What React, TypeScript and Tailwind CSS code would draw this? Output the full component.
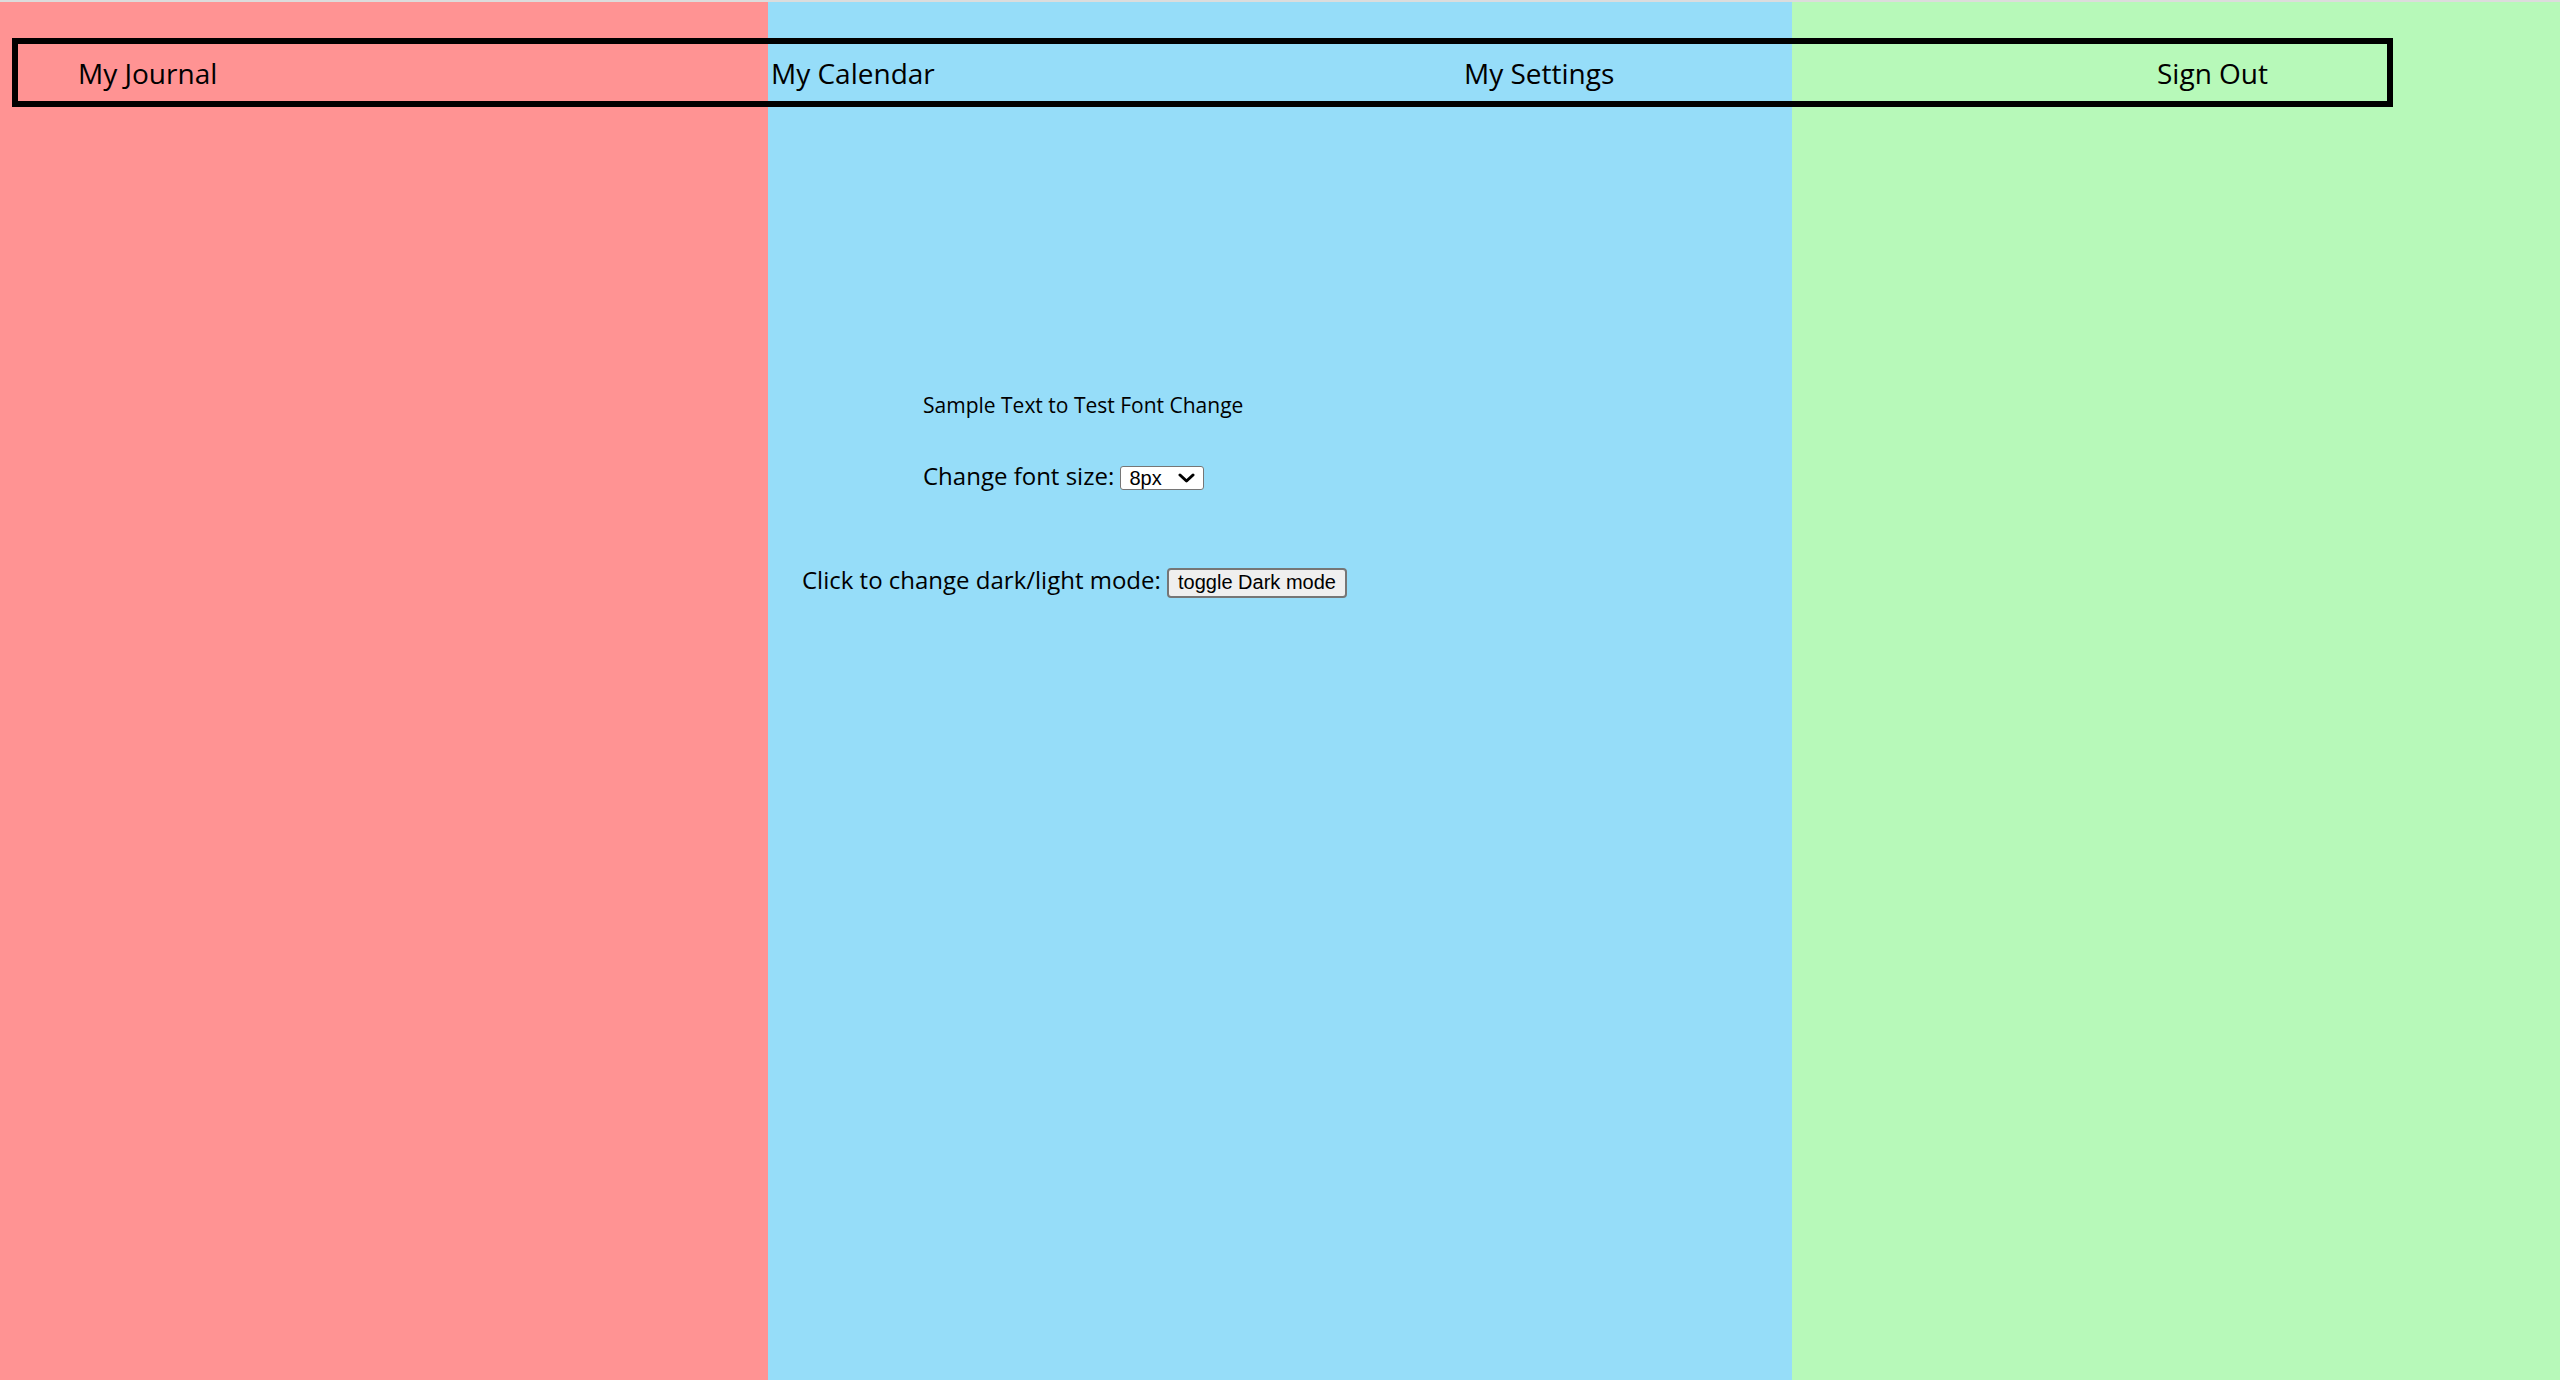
import { useState } from 'react';

const NAV_ITEMS = ['My Journal', 'My Calendar', 'My Settings', 'Sign Out'];

export default function App() {
  const [size, setSize] = useState('8px');
  const [dark, setDark] = useState(false);

  return (
    <div className="relative h-screen overflow-hidden border-t-2 border-[#dcdcdc] font-['Open_Sans',sans-serif] text-black">
      <div className="grid h-full grid-cols-[3fr_4fr_3fr]">
        <div className="bg-[#ff9393]" />
        <div className="bg-[#96ddf9] pt-[389px]">
          <p className="ml-[155px] text-[21px] leading-[29px]">Sample Text to Test Font Change</p>
          <p className="ml-[155px] mt-[39px] text-[24px] leading-[33px]">
            Change font size:{' '}
            <span className="relative inline-flex">
              <select
                value={size}
                onChange={(e) => setSize(e.target.value)}
                className="h-[24px] w-[84px] appearance-none rounded-[3px] border border-[#767676] bg-white pl-[8px] font-['Liberation_Sans',Arial,sans-serif] text-[20px] leading-[22px]"
              >
                <option>8px</option>
                <option>12px</option>
                <option>16px</option>
                <option>20px</option>
              </select>
              <svg
                className="pointer-events-none absolute right-[9px] top-[7px]"
                width="17"
                height="10"
                viewBox="0 0 17 10"
                fill="none"
              >
                <polyline points="2,2 8.5,8 15,2" stroke="black" strokeWidth="3" strokeLinecap="round" strokeLinejoin="round" />
              </svg>
            </span>
          </p>
          <p className="ml-[34px] mt-[71px] text-[24px] leading-[33px]">
            Click to change dark/light mode:{' '}
            <button
              onClick={() => setDark(!dark)}
              className="h-[30px] rounded-[4px] border-2 border-[#767676] bg-[#efefef] px-[9px] font-['Liberation_Sans',Arial,sans-serif] text-[20px] leading-[23px]"
            >
              toggle Dark mode
            </button>
          </p>
        </div>
        <div className="bg-[#b7f9b9]" />
      </div>

      <nav className="absolute left-[12px] top-[36px] flex h-[69px] w-[2381px] border-[6px] border-black pl-[60px] pt-[2px] text-[28px] leading-[55px]">
        {NAV_ITEMS.map((item, i) => (
          <a key={item} href="#" className={i < 3 ? 'w-[693px] shrink-0' : 'shrink-0'}>
            {item}
          </a>
        ))}
      </nav>
    </div>
  );
}
